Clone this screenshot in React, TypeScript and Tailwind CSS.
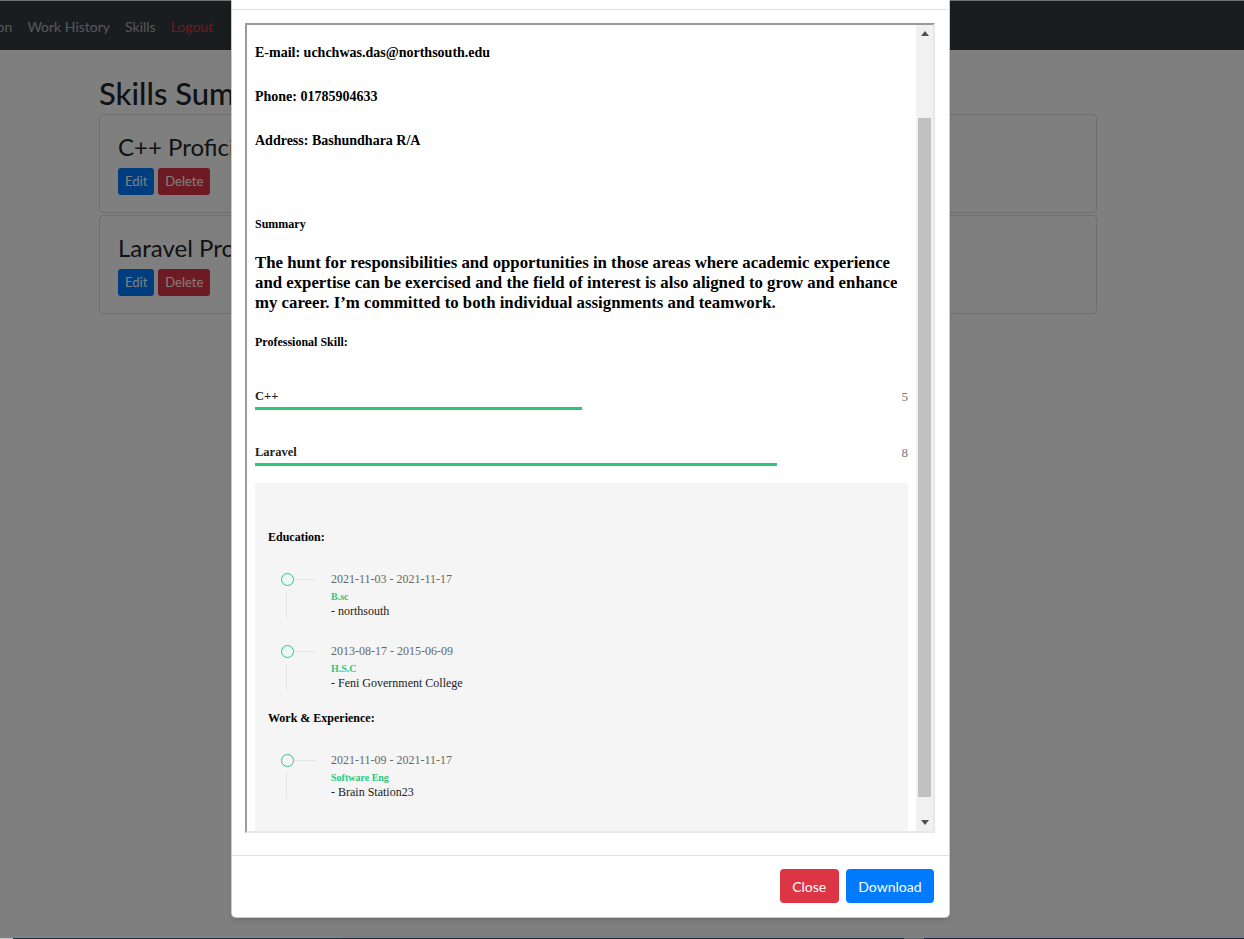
import React from 'react';

const skills = [
  { name: 'C++', level: 5 },
  { name: 'Laravel', level: 8 },
];

const education = [
  { from: '2021-11-03', to: '2021-11-17', title: 'B.sc', place: 'northsouth' },
  { from: '2013-08-17', to: '2015-06-09', title: 'H.S.C', place: 'Feni Government College' },
];

const work = [{ from: '2021-11-09', to: '2021-11-17', title: 'Software Eng', place: 'Brain Station23' }];

type Entry = { from: string; to: string; title: string; place: string };

const TimelineItem = ({ item, first }: { item: Entry; first?: boolean }) => (
  <div className={`flex ${first ? 'mt-[28px]' : 'mt-[26px]'}`}>
    <div className="w-[63px] shrink-0 flex flex-col">
      <div className="h-[14px] flex items-center">
        <div className="ml-[12.5px] w-[13px] h-[13px] rounded-full border-[1.5px] border-[#2dc87f] box-border" />
        <div className="w-[22px] h-px bg-[#e4e4e4]" />
      </div>
      <div className="ml-[18px] mt-[6px] w-px h-[26px] bg-[#e4e4e4]" />
    </div>
    <div className="flex flex-col">
      <div className="text-[12px] leading-[14px] text-[#666]">
        {item.from} - {item.to}
      </div>
      <div className="mt-[5px] text-[10px] leading-[12px] font-bold text-[#2dc87f]">{item.title}</div>
      <div className="mt-[1px] text-[12px] leading-[14px] text-[#222]">- {item.place}</div>
    </div>
  </div>
);

const Arrow = ({ up }: { up?: boolean }) => (
  <div className="h-[17px] flex items-center justify-center">
    <svg width="8" height="5" viewBox="0 0 8 5">
      {up ? <polygon points="0,5 4,0 8,5" fill="#505050" /> : <polygon points="0,0 8,0 4,5" fill="#505050" />}
    </svg>
  </div>
);

const ResumePreview = () => (
  <div className="h-[810px] border-2 border-t-[#9a9a9a] border-l-[#9a9a9a] border-r-[#e8e8e8] border-b-[#e8e8e8] flex bg-white">
    <div className="flex-1 overflow-hidden px-2 pt-[20px] font-['Liberation_Serif',serif] text-black">
      <p className="text-[14px] leading-[16px] font-bold">E-mail: uchchwas.das@northsouth.edu</p>
      <p className="mt-[28px] text-[14px] leading-[16px] font-bold">Phone: 01785904633</p>
      <p className="mt-[28px] text-[14px] leading-[16px] font-bold">Address: Bashundhara R/A</p>

      <h6 className="mt-[69px] text-[12px] leading-[13px] font-bold">Summary</h6>
      <p className="mt-[22px] text-[16.8px] leading-[20px] font-bold">
        The hunt for responsibilities and opportunities in those areas where academic experience and expertise can be
        exercised and the field of interest is also aligned to grow and enhance my career. I’m committed to both
        individual assignments and teamwork.
      </p>

      <h6 className="mt-[23px] text-[12px] leading-[13px] font-bold">Professional Skill:</h6>

      {skills.map((s, i) => (
        <div key={s.name} className={i === 0 ? 'mt-[39px]' : 'mt-[34px]'}>
          <div className="flex justify-between items-center leading-[16px]">
            <span className="text-[12.5px] font-bold text-[#222]">{s.name}</span>
            <span className="text-[13px] text-[#777] translate-y-[1px]">{s.level}</span>
          </div>
          <div className="mt-[3px] h-[3px] bg-[#2ac77c]" style={{ width: `${s.level * 10}%` }} />
        </div>
      ))}

      <div className="mt-[17px] bg-[#f5f5f5] pt-[47px] px-[13px] pb-[60px]">
        <h6 className="text-[12px] leading-[14px] font-bold">Education:</h6>
        {education.map((e, i) => (
          <TimelineItem key={e.title} item={e} first={i === 0} />
        ))}
        <h6 className="mt-[21px] text-[12px] leading-[14px] font-bold">Work &amp; Experience:</h6>
        {work.map((e) => (
          <TimelineItem key={e.title} item={e} first />
        ))}
      </div>
    </div>

    {/* scrollbar of the preview frame */}
    <div className="w-[17px] shrink-0 bg-[#f1f1f1] flex flex-col">
      <Arrow up />
      <div className="mt-[76px] mx-[2px] h-[679px] bg-[#c1c1c1]" />
      <div className="flex-1" />
      <Arrow />
    </div>
  </div>
);

const SkillCard = ({ title }: { title: string }) => (
  <div className="border border-black/[0.125] rounded-[4px] px-[18px] pt-[17px] pb-[17px]">
    <h4 className="text-[24px] leading-[30px] text-[#212529]">{title}</h4>
    <div className="mt-[6px] flex gap-[4px]">
      <button className="h-[27px] px-[7px] rounded-[3px] bg-[#007bff] text-white text-[13px]">Edit</button>
      <button className="h-[27px] px-[7px] rounded-[3px] bg-[#dc3545] text-white text-[13px]">Delete</button>
    </div>
  </div>
);

export default function App() {
  return (
    <div className="relative h-[939px] w-full overflow-hidden bg-white font-['Lato',sans-serif]">
      <div className="h-px bg-[#e6e6e6]" />
      <nav className="h-[49px] bg-[#343a40] flex items-center pt-[1px] overflow-hidden">
        <ul className="flex gap-[15px] -ml-[49px] text-[14px] whitespace-nowrap">
          <li className="text-white/60">Education</li>
          <li className="text-white/60">Work History</li>
          <li className="text-white/60">Skills</li>
          <li className="text-[#dc3545]">Logout</li>
        </ul>
      </nav>

      <main className="ml-[99px] w-[998px] pt-[24px]">
        <h2 className="text-[31px] leading-[38px] font-medium text-[#212529]">Skills Summary</h2>
        <div className="mt-[2px] flex flex-col gap-[2px]">
          <SkillCard title="C++ Proficiency" />
          <SkillCard title="Laravel Proficiency" />
        </div>
      </main>

      {/* backdrop */}
      <div className="fixed inset-0 bg-black/50" />

      {/* modal */}
      <div className="fixed top-0 left-[231px] w-[719px] bg-white border border-t-0 border-black/20 rounded-b-[5px] shadow-md">
        <div className="h-[10px] border-b border-[#dee2e6]" />
        <div className="pl-[13px] pr-[14px] pt-[13px] pb-[22px]">
          <ResumePreview />
        </div>
        <div className="border-t border-[#dee2e6] pt-[13px] pb-[14px] pr-[15px] flex justify-end gap-[7px]">
          <button className="h-[34px] px-[12.5px] rounded-[4px] bg-[#dc3545] text-white text-[14px]">Close</button>
          <button className="h-[34px] px-[12.5px] rounded-[4px] bg-[#007bff] text-white text-[14px]">Download</button>
        </div>
      </div>

      {/* taskbar edge at the very bottom */}
      <div className="fixed bottom-0 left-0 right-0 h-px flex">
        <div className="w-[13px] bg-[#c4c4c4]" />
        <div className="w-[330px] bg-[#1c3640]" />
        <div className="flex-1 bg-[#1e2d3a]" />
        <div className="w-[20px] bg-[#5a666c]" />
        <div className="w-[320px] bg-[#1c2440]" />
      </div>
    </div>
  );
}
